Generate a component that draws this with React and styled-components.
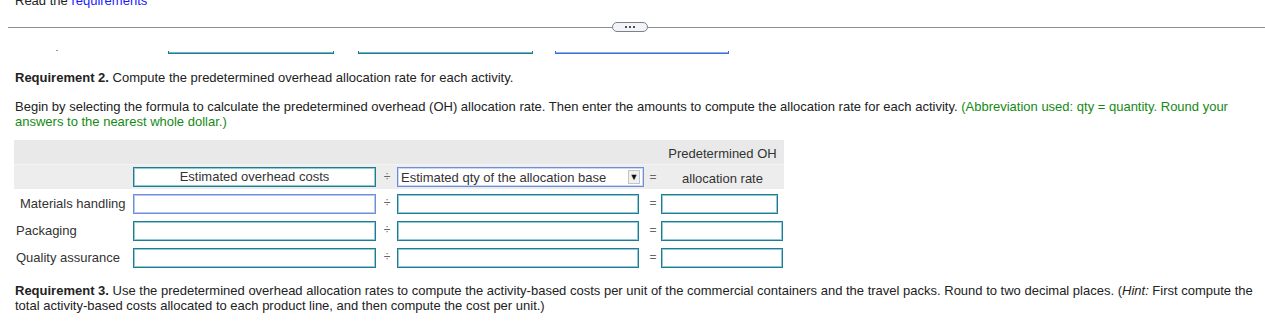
import React from "react";
import styled, { createGlobalStyle } from "styled-components";

const GlobalStyle = createGlobalStyle`
  html, body {
    margin: 0;
    padding: 0;
    background: #fff;
    overflow: hidden;
  }
  body {
    font-family: "Liberation Sans", Arial, sans-serif;
    font-size: 13px;
    line-height: 15px;
    color: #222;
  }
`;

const Page = styled.div`
  margin-top: -7px;
  width: 1265px;
`;

const TopNote = styled.div`
  padding-left: 15px;
  height: 15px;
  a {
    color: #1a1aff;
    text-decoration: none;
  }
`;

const Divider = styled.div`
  display: flex;
  align-items: center;
  margin: 14px 0 0 8px;
  height: 10px;
`;

const Rule = styled.div`
  height: 1px;
  background: #8c8f94;
  width: ${(p) => (p.$width ? `${p.$width}px` : "auto")};
  flex: ${(p) => (p.$width ? "none" : "1")};
`;

const Pill = styled.div`
  width: 34px;
  height: 8px;
  border: 1px solid #7c8088;
  border-radius: 5px;
  background: #f3f4f7;
  display: flex;
  align-items: center;
  justify-content: center;
  gap: 2px;
  span {
    width: 2px;
    height: 2px;
    background: #4b4f57;
  }
`;

const TabStrip = styled.div`
  height: 5px;
  margin-top: 17px;
  display: flex;
  align-items: flex-end;
`;

const Tick = styled.span`
  width: 2px;
  height: 1px;
  background: #b08a80;
  margin: 0 110px 3px 56px;
`;

const TabLine = styled.span`
  width: ${(p) => p.$w}px;
  margin-left: ${(p) => p.$gap}px;
  height: 3px;
  border: 1px solid ${(p) => p.$edge};
  border-top: none;
  box-sizing: border-box;
  background: linear-gradient(
    to bottom,
    transparent 0,
    transparent 1px,
    ${(p) => p.$fill} 1px
  );
`;

const Para = styled.p`
  margin: ${(p) => p.$mt || 0}px 0 0 15px;
  padding-right: ${(p) => p.$pr || 20}px;
  strong {
    font-weight: bold;
  }
`;

const Green = styled.span`
  color: #148a14;
`;

const Table = styled.div`
  margin: 11px 0 0 14px;
  width: 770px;
`;

const HeadTop = styled.div`
  height: 24px;
  background: #e9e9e9;
  display: grid;
  grid-template-columns: 647px 123px;
  align-items: center;
`;

const HeadRow = styled.div`
  height: 24px;
  border-top: 1px solid #f4f4f4;
  background: #ededed;
  display: grid;
  grid-template-columns: 119px 244px 20px 248px 16px 123px;
  align-items: center;
`;

const Row = styled.div`
  height: 27px;
  display: grid;
  grid-template-columns: 119px 244px 20px 248px 16px 128px;
  align-items: end;
  padding-bottom: 2px;
  box-sizing: border-box;
`;

const HeadLabel = styled.div`
  grid-column: ${(p) => p.$col || "auto"};
  text-align: center;
  color: #333;
  padding-top: ${(p) => p.$pt || 0}px;
`;

const Label = styled.div`
  padding-left: ${(p) => (p.$indent ? 6 : 2)}px;
  color: #333;
  align-self: center;
  padding-top: 4px;
  white-space: nowrap;
`;

const Op = styled.div`
  text-align: center;
  color: #666;
  font-size: 12px;
  align-self: center;
  padding-top: ${(p) => p.$pt || 0}px;
`;

const Box = styled.div`
  width: ${(p) => p.$w || 243}px;
  height: 20px;
  box-sizing: border-box;
  border: 1px solid ${(p) => (p.$focus ? "#6b8fd9" : "#1f7c91")};
  box-shadow: inset 0 0 0 1px ${(p) => (p.$focus ? "#b7c9f0" : "#8fcad6")};
  background: #fff;
  color: #333;
  text-align: ${(p) => (p.$center ? "center" : "left")};
  line-height: 18px;
  padding: 0 3px;
  white-space: nowrap;
`;

const Select = styled.div`
  width: 247px;
  height: 20px;
  box-sizing: border-box;
  border: 1px solid #6b8fd9;
  box-shadow: inset 0 0 0 1px #c9d7f5;
  background: #fff;
  display: flex;
  align-items: center;
  justify-content: space-between;
  padding: 0 3px;
  color: #333;
`;

const Arrow = styled.span`
  width: 12px;
  height: 14px;
  box-sizing: border-box;
  border: 1px solid #c4c4c4;
  background: #f0f0f0;
  display: flex;
  align-items: center;
  justify-content: center;
  font-size: 9px;
  color: #111;
`;

const rows = [
  { name: "Materials handling", indent: true, focus: true, w: 117 },
  { name: "Packaging", w: 122 },
  { name: "Quality assurance", w: 122 },
];

export default function App() {
  return (
    <>
      <GlobalStyle />
      <Page>
        <TopNote>
          Read the <a href="#req">requirements</a>
        </TopNote>
        <Divider>
          <Rule $width={604} />
          <Pill>
            <span />
            <span />
            <span />
          </Pill>
          <Rule />
        </Divider>
        <TabStrip>
          <Tick />
          <TabLine $w={166} $gap={0} $edge="#1f7c91" $fill="#6fb9c7" />
          <TabLine $w={175} $gap={24} $edge="#1f7c91" $fill="#6fb9c7" />
          <TabLine $w={174} $gap={22} $edge="#3f6fd0" $fill="#8eaeea" />
        </TabStrip>

        <Para $mt={16}>
          <strong>Requirement 2.</strong> Compute the predetermined overhead
          allocation rate for each activity.
        </Para>
        <Para $mt={14}>
          Begin by selecting the formula to calculate the predetermined
          overhead (OH) allocation rate. Then enter the amounts to compute the
          allocation rate for each activity.{" "}
          <Green>
            (Abbreviation used: qty = quantity. Round your answers to the
            nearest whole dollar.)
          </Green>
        </Para>

        <Table>
          <HeadTop>
            <HeadLabel $col="2" $pt={2}>
              Predetermined OH
            </HeadLabel>
          </HeadTop>
          <HeadRow>
            <div />
            <Box $center>Estimated overhead costs</Box>
            <Op>÷</Op>
            <Select>
              <span>Estimated qty of the allocation base</span>
              <Arrow>▼</Arrow>
            </Select>
            <Op>=</Op>
            <HeadLabel $pt={2}>allocation rate</HeadLabel>
          </HeadRow>
          {rows.map((r) => (
            <Row key={r.name}>
              <Label $indent={r.indent}>{r.name}</Label>
              <Box $focus={r.focus} />
              <Op $pt={4}>÷</Op>
              <Box $w={242} />
              <Op $pt={4}>=</Op>
              <Box $w={r.w} />
            </Row>
          ))}
        </Table>

        <Para $mt={13} $pr={8}>
          <strong>Requirement 3.</strong> Use the predetermined overhead
          allocation rates to compute the activity-based costs per unit of the
          commercial containers and the travel packs. Round to two decimal
          places. (<em>Hint:</em> First compute the total activity-based costs
          allocated to each product line, and then compute the cost per unit.)
        </Para>
      </Page>
    </>
  );
}
